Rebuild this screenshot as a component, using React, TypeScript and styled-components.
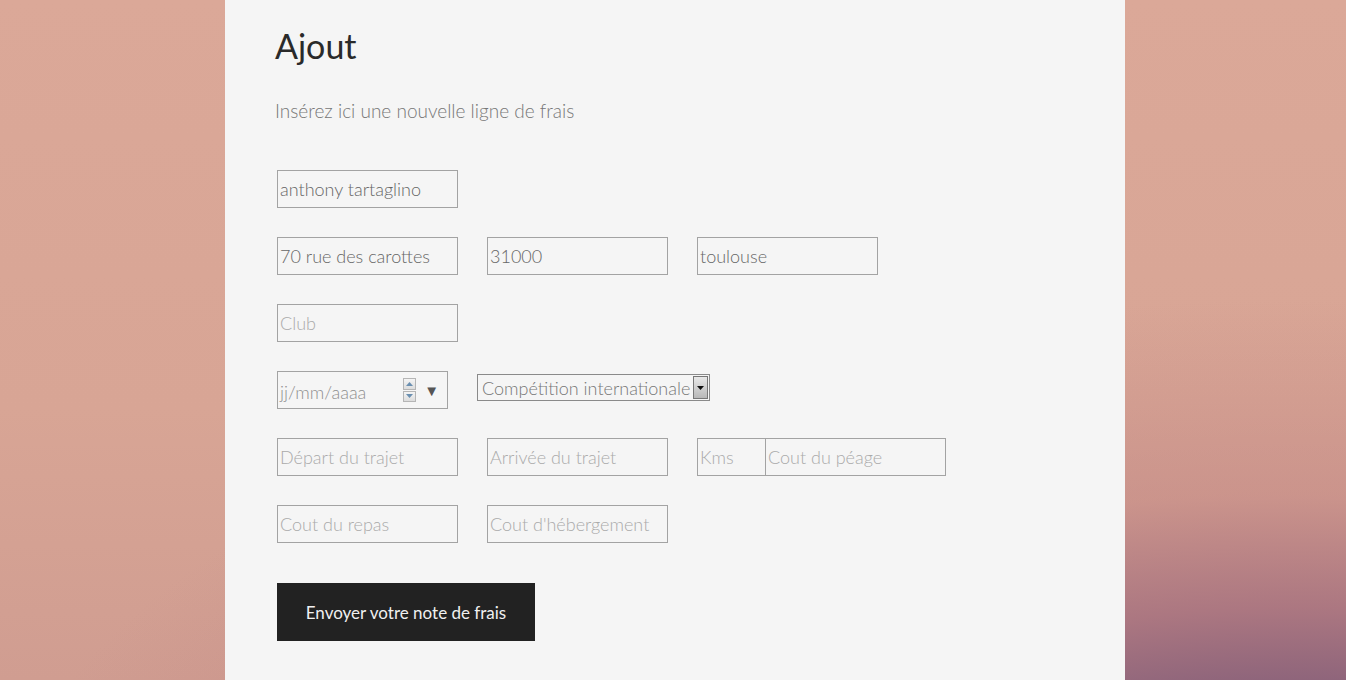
import React from "react";
import styled, { createGlobalStyle } from "styled-components";

const Global = createGlobalStyle`
  html, body { margin: 0; padding: 0; height: 100%; }
  body {
    font-family: Lato, "Open Sans", sans-serif;
    background: #d8a595;
  }
`;

const Page = styled.div`
  height: 680px;
  overflow: hidden;
  display: flex;
  justify-content: center;
  padding-left: 4px;
  box-sizing: border-box;
  background:
    radial-gradient(ellipse 1300px 560px at 1300px 860px, rgba(124, 90, 122, 1) 0%, rgba(138, 98, 122, 1) 30%, rgba(165, 112, 126, 0.85) 45%, rgba(190, 130, 130, 0.45) 65%, rgba(205, 145, 138, 0) 100%),
    linear-gradient(180deg, #dba898 0%, #d8a595 60%, #d09d91 100%);
`;

const Panel = styled.main`
  width: 900px;
  background: #f5f5f5;
  padding: 24px 50px 0 50px;
  box-sizing: border-box;
`;

const Title = styled.h1`
  margin: 0;
  font-family: Lato, sans-serif;
  font-weight: 400;
  font-size: 34px;
  line-height: 44px;
  color: #2a2a2a;
`;

const Lead = styled.p`
  margin: 31px 0 0 0;
  font-weight: 300;
  font-size: 19px;
  line-height: 24px;
  color: #777;
`;

const Form = styled.form`
  margin-top: 47px;
  display: flex;
  flex-direction: column;
  gap: 29px;
  padding-left: 2px;
`;

const Row = styled.div<{ $gap?: number }>`
  display: flex;
  align-items: flex-start;
  gap: ${(p) => p.$gap ?? 29}px;
  height: 38px;
`;

const Field = styled.input<{ $w?: number }>`
  width: ${(p) => p.$w ?? 181}px;
  height: 38px;
  box-sizing: border-box;
  border: 1px solid #a3a3a3;
  background: transparent;
  padding: 0 2px;
  font-family: Lato, sans-serif;
  font-weight: 300;
  font-size: 18px;
  color: #666;
  outline: none;
  &::placeholder { color: #aaa; }
`;

const Joined = styled.div`
  display: flex;
  & > input + input { margin-left: -1px; }
`;

const DateBox = styled.div`
  width: 171px;
  height: 38px;
  box-sizing: border-box;
  border: 1px solid #a3a3a3;
  display: flex;
  align-items: center;
  padding: 0 8px 0 2px;
  font-weight: 300;
  font-size: 18px;
  color: #8f8f8f;
  margin-right: 1px;
`;

const DateText = styled.span`
  flex: 1;
  padding-top: 4px;
`;

const Spinner = styled.div`
  width: 13px;
  height: 24px;
  display: flex;
  flex-direction: column;
  gap: 1px;
  margin-right: 8px;
`;

const SpinBtn = styled.div`
  flex: 1;
  border: 1px solid #b5b5b5;
  background: linear-gradient(#f4f4f4, #dcdcdc);
  display: flex;
  align-items: center;
  justify-content: center;
`;

const Caret = styled.span`
  font-size: 15px;
  color: #555;
  line-height: 1;
`;

const SelectBox = styled.div`
  margin-top: 3px;
  height: 27px;
  box-sizing: border-box;
  border: 1px solid #8a8a8a;
  display: flex;
  align-items: center;
  padding: 0 1px 0 4px;
  gap: 3px;
  font-weight: 300;
  font-size: 18px;
  color: #777;
  background: #f5f5f5;
`;

const SelectArrow = styled.div`
  width: 15px;
  height: 23px;
  box-sizing: border-box;
  border: 1px solid #777;
  background: linear-gradient(#e8e8e8, #b8b8b8);
  display: flex;
  align-items: center;
  justify-content: center;
`;

const Button = styled.button`
  margin-top: 11px;
  align-self: flex-start;
  width: 258px;
  height: 58px;
  border: none;
  background: #222;
  color: #f0f0f0;
  font-family: Lato, sans-serif;
  font-weight: 400;
  font-size: 17px;
  cursor: pointer;
`;

export default function App() {
  return (
    <>
      <Global />
      <Page>
        <Panel>
          <Title>Ajout</Title>
          <Lead>Insérez ici une nouvelle ligne de frais</Lead>
          <Form onSubmit={(e) => e.preventDefault()}>
            <Row>
              <Field readOnly defaultValue="anthony tartaglino" />
            </Row>
            <Row>
              <Field readOnly defaultValue="70 rue des carottes" />
              <Field readOnly defaultValue="31000" />
              <Field readOnly defaultValue="toulouse" />
            </Row>
            <Row>
              <Field placeholder="Club" />
            </Row>
            <Row $gap={28}>
              <DateBox>
                <DateText>jj/mm/aaaa</DateText>
                <Spinner>
                  <SpinBtn>
                    <svg width="7" height="4" viewBox="0 0 7 4"><path d="M0 4 L3.5 0 L7 4Z" fill="#6a8fb0" /></svg>
                  </SpinBtn>
                  <SpinBtn>
                    <svg width="7" height="4" viewBox="0 0 7 4"><path d="M0 0 L3.5 4 L7 0Z" fill="#6a8fb0" /></svg>
                  </SpinBtn>
                </Spinner>
                <Caret>▼</Caret>
              </DateBox>
              <SelectBox>
                <span>Compétition internationale</span>
                <SelectArrow>
                  <svg width="7" height="4" viewBox="0 0 7 4"><path d="M0 0 L3.5 4 L7 0Z" fill="#111" /></svg>
                </SelectArrow>
              </SelectBox>
            </Row>
            <Row>
              <Field placeholder="Départ du trajet" />
              <Field placeholder="Arrivée du trajet" />
              <Joined>
                <Field $w={69} placeholder="Kms" />
                <Field placeholder="Cout du péage" />
              </Joined>
            </Row>
            <Row>
              <Field placeholder="Cout du repas" />
              <Field placeholder="Cout d'hébergement" />
            </Row>
            <Button type="submit">Envoyer votre note de frais</Button>
          </Form>
        </Panel>
      </Page>
    </>
  );
}
